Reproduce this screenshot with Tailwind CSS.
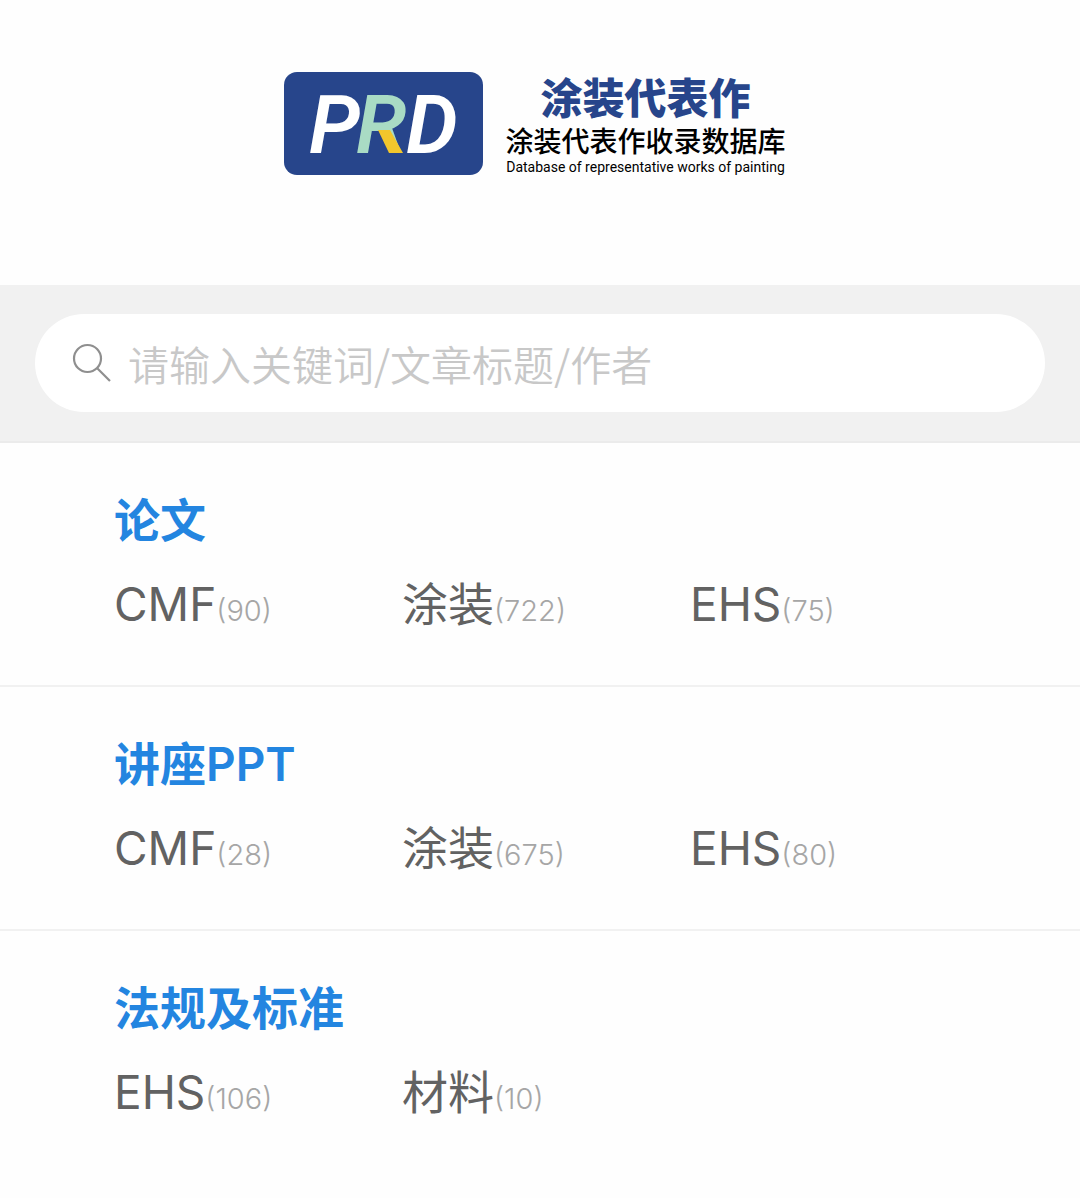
<!DOCTYPE html>
<html lang="zh-CN">
<head>
<meta charset="utf-8">
<meta name="viewport" content="width=device-width, initial-scale=1">
<title>涂装代表作收录数据库</title>
<script src="https://cdn.jsdelivr.net/npm/@tailwindcss/browser@4"></script>
</head>
<body class="min-h-screen bg-[#fefefe] font-['Inter','Noto_Sans_CJK_SC',sans-serif] text-[#626262]">
<header class="flex items-start justify-center gap-[22px] pt-[72px] pr-[10px] pb-[109px]">
  <svg class="h-[103px] w-[199px] shrink-0" viewBox="0 0 199 103" role="img" aria-label="PRD">
    <rect width="199" height="103" rx="13" fill="#27458b"/>
    <text x="25 72 122" y="81" fill="#fff" font-family="Roboto, sans-serif" font-size="82" font-weight="600" font-style="italic">P<tspan fill="#a9dbc4">R</tspan>D</text>
    <path d="M94 58h12l13 23h-14z" fill="#f2c62c"/>
  </svg>
  <div class="flex flex-col items-center whitespace-nowrap">
    <h1 class="text-[42px] leading-[54px] font-black text-[#27458b]">涂装代表作</h1>
    <p class="text-[28px] leading-[32px] font-medium text-black">涂装代表作收录数据库</p>
    <p class="font-['Roboto',sans-serif] text-[14px] leading-[18px] text-black">Database of representative works of painting</p>
  </div>
</header>
<form class="border-b-2 border-[#ebebeb] bg-[#f1f1f1] px-[35px] py-[29px]" role="search">
  <label class="flex h-[98px] items-center gap-[16px] rounded-full bg-white pl-[37px] pr-8">
    <svg class="size-10 shrink-0" viewBox="0 0 40 40" fill="none" stroke="#8f8f8f" stroke-width="2.2" aria-hidden="true">
      <circle cx="15.500" cy="15.500" r="13.500"/>
      <path d="M25 25 38 38"/>
    </svg>
    <input type="search" aria-label="搜索" placeholder="请输入关键词/文章标题/作者" class="min-w-0 flex-1 bg-transparent font-['Noto_Sans_CJK_SC',sans-serif] text-[41px] leading-[60px] font-[350] outline-none placeholder:text-[#c8c8c8]">
  </label>
</form>
<main>
  <section class="border-b-2 border-[#f1f1f1] pt-[45px] pr-[102px] pb-[49px] pl-[114px]">
    <h2 class="text-[46px] leading-[64px] font-bold text-[#2385e0]">论文</h2>
    <ul class="mt-[20px] grid grid-cols-3 text-[46px] leading-[64px] whitespace-nowrap">
      <li><a href="#">CMF<span class="text-[29px] leading-none font-light text-[#a6a6a6]">(90)</span></a></li>
      <li><a href="#">涂装<span class="text-[29px] leading-none font-light text-[#a6a6a6]">(722)</span></a></li>
      <li><a href="#">EHS<span class="text-[29px] leading-none font-light text-[#a6a6a6]">(75)</span></a></li>
    </ul>
  </section>
  <section class="border-b-2 border-[#f1f1f1] pt-[45px] pr-[102px] pb-[49px] pl-[114px]">
    <h2 class="text-[46px] leading-[64px] font-bold text-[#2385e0]">讲座<span class="font-semibold">PPT</span></h2>
    <ul class="mt-[20px] grid grid-cols-3 text-[46px] leading-[64px] whitespace-nowrap">
      <li><a href="#">CMF<span class="text-[29px] leading-none font-light text-[#a6a6a6]">(28)</span></a></li>
      <li><a href="#">涂装<span class="text-[29px] leading-none font-light text-[#a6a6a6]">(675)</span></a></li>
      <li><a href="#">EHS<span class="text-[29px] leading-none font-light text-[#a6a6a6]">(80)</span></a></li>
    </ul>
  </section>
  <section class="pt-[45px] pr-[102px] pb-[49px] pl-[114px]">
    <h2 class="text-[46px] leading-[64px] font-bold text-[#2385e0]">法规及标准</h2>
    <ul class="mt-[20px] grid grid-cols-3 text-[46px] leading-[64px] whitespace-nowrap">
      <li><a href="#">EHS<span class="text-[29px] leading-none font-light text-[#a6a6a6]">(106)</span></a></li>
      <li><a href="#">材料<span class="text-[29px] leading-none font-light text-[#a6a6a6]">(10)</span></a></li>
    </ul>
  </section>
</main>
</body>
</html>
